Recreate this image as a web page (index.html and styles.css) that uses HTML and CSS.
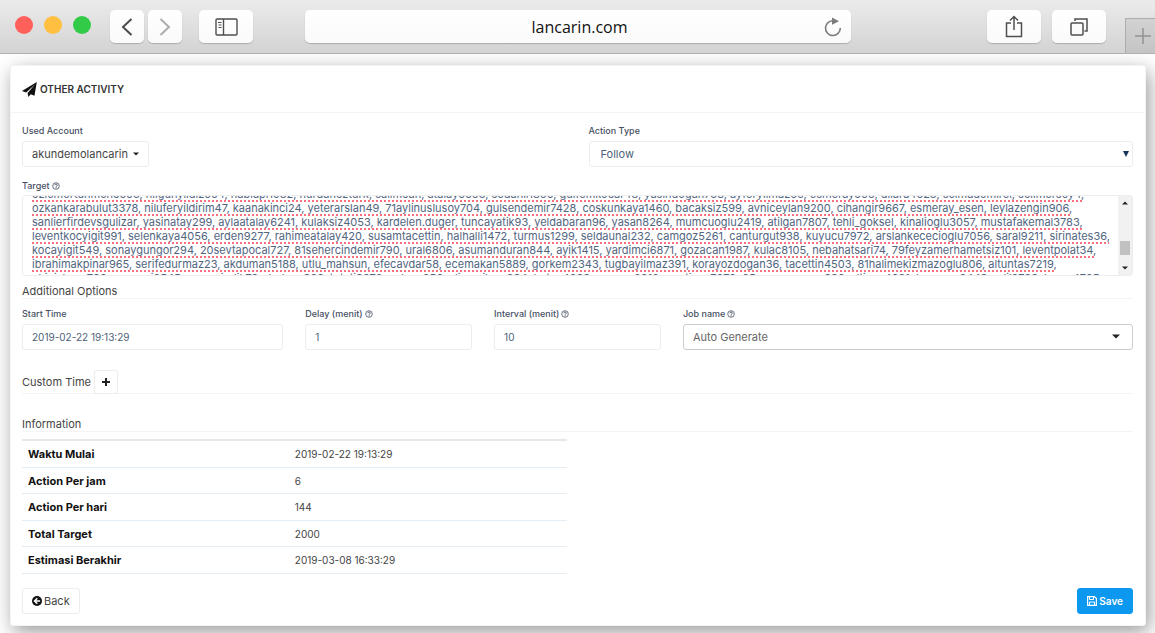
FILE: index.html
```html
<!DOCTYPE html>
<html lang="id">
<head>
<meta charset="utf-8">
<title>Other Activity</title>
<meta name="viewport" content="width=device-width, initial-scale=1">
<link rel="stylesheet" href="styles.css">
</head>
<body>
<svg class="sprite" aria-hidden="true">
  <symbol id="help" viewBox="0 0 16 16"><circle cx="8" cy="8" r="6.6" fill="none" stroke="currentColor" stroke-width="1.6"/><path d="M5.6 6.4C5.7 4.8 6.7 4 8.1 4c1.400 0 2.500.9 2.500 2.200 0 1.700-2.400 1.800-2.400 3.400" fill="none" stroke="currentColor" stroke-width="1.800"/><rect x="7.200" y="10.600" width="2" height="2" fill="currentColor"/></symbol>
  <symbol id="caret" viewBox="0 0 8 5"><path d="M0 .5h8L4 4.500z" fill="currentColor"/></symbol>
</svg>

<header class="toolbar">
  <div class="lights"><span class="light red"></span><span class="light amber"></span><span class="light green"></span></div>
  <div class="nav">
    <button class="tool narrow" aria-label="Previous page"><svg width="12" height="18" viewBox="0 0 12 18"><path d="M10.500 1L2 9l8.500 8" fill="none" stroke="#4c4c4c" stroke-width="2"/></svg></button>
    <button class="tool narrow" aria-label="Next page"><svg width="12" height="18" viewBox="0 0 12 18"><path d="M1.500 1L10 9l-8.500 8" fill="none" stroke="#adadad" stroke-width="2"/></svg></button>
  </div>
  <button class="tool" aria-label="Sidebar"><svg width="23" height="18" viewBox="0 0 23 18" fill="none" stroke="#4f4f4f" stroke-width="1.400"><rect x="1" y="1" width="21" height="16" rx="1"/><path d="M8.500 1v16"/><path d="M3 4.500h3.500M3.500 7h3M3.500 9.500h3" stroke-width="1"/></svg></button>
  <div class="address">
    <input class="url" type="text" value="lancarin.com" aria-label="Address">
    <button class="reload" aria-label="Reload"><svg width="18" height="20" viewBox="0 0 18 20"><path d="M10 3.800A7.400 7.400 0 1 0 16.300 11" fill="none" stroke="#7c7c7c" stroke-width="1.600"/><path d="M8 .5l7 3.700-7 3.600z" fill="#7c7c7c"/></svg></button>
  </div>
  <div class="actions">
    <button class="tool" aria-label="Share"><svg width="18" height="23" viewBox="0 0 18 23" fill="none" stroke="#4f4f4f" stroke-width="1.500"><path d="M6 8H1.500v13.500h15V8H12M9 15V1.500M5 5.500l4-4 4 4"/></svg></button>
    <button class="tool" aria-label="Tabs"><svg width="18" height="18" viewBox="0 0 18 18" fill="none" stroke="#4f4f4f" stroke-width="1.500"><rect x="1" y="5" width="12" height="12" rx="1"/><path d="M5 3V1h12v12h-2.500"/></svg></button>
  </div>
  <button class="new-tab" aria-label="New tab"><svg width="16" height="16" viewBox="0 0 16 16"><path d="M8 0v16M0 8h16" stroke="#929292" stroke-width="1.500"/></svg></button>
</header>

<main class="card">
  <h1 class="card-title"><svg width="15" height="15" viewBox="0 0 16 16"><path d="M15.800 0L0 9.500l4.500 1.800L14 2.500 6 11.800 6.700 16l2.600-3 4 1.700z" fill="#111"/></svg>OTHER ACTIVITY</h1>
  <form class="form">
    <div class="pair">
      <div class="field">
        <label class="label" for="account">Used Account</label>
        <button class="btn account" id="account" type="button">akundemolancarin<svg width="6" height="4"><use href="#caret"/></svg></button>
      </div>
      <div class="field">
        <label class="label" for="action">Action Type</label>
        <div class="select-wrap action"><select class="control" id="action"><option>Follow</option></select><svg class="arrow" width="6" height="6" viewBox="0 0 6 6"><path d="M0 0h6L3 6z" fill="#17365f"/></svg></div>
      </div>
    </div>

    <div class="field target">
      <label class="label" for="target">Target<svg class="help" width="8" height="8"><use href="#help"/></svg></label>
      <div class="target-box">
        <textarea id="target" class="target-text" spellcheck="false" wrap="off">ozlemertunmenc503, nilgunyildiz504, nabiapi1982, nurdanozturk, salimcan, atalay5603, sedanil1860, gulfemkocar48, yasindogan738, ayferyilmaz66, esmeray503, dilara4523, selmademirel, selimersoy4,
ozkankarabulut3378, niluferyildirim47, kaanakinci24, yeterarslan49, 71aylinuslusoy704, gulsendemir7428, coskunkaya1460, bacaksiz599, avniceylan9200, cihangir9667, esmeray_esen, leylazengin906,
sanlierfirdevsgulizar, yasinatay299, aylaatalay6241, kulaksiz4053, kardelen.duger, tuncayatik93, yeldabaran96, yasan8264, mumcuoglu2419, atilgan7807, tehli_goksel, kinalioglu3057, mustafakemal3783,
leventkocyigit991, selenkaya4056, erden9277, rahimeatalay420, susamtacettin, halhalli1472, turmus1299, seldaunal232, camgoz5261, canturgut938, kuyucu7972, arslankececioglu7056, saral9211, sirinates36,
kocayigit549, sonaygungor294, 20sevtapocal727, 81sehercindemir790, ural6806, asumanduran844, ayik1415, yardimci6871, gozacan1987, kulac8105, nebahatsari74, 79feyzamerhametsiz101, leventpolat34,
ibrahimakpinar965, serifedurmaz23, akduman5188, utlu_mahsun, efecavdar58, ecemakan5889, gorkem2343, tugbayilmaz391, korayozdogan36, tacettin4503, 81halimekizmazoglu806, altuntas7219,
okipiskaya736, namemi9545, yasemindik79, dudane366, tutati8672, selcan256, aliosmilcan984, betus4088, cansun2012, martinsu7679, 65maramurcem386, altinsu4991, kuzeyan9448, adil9708, karsu4795,
</textarea>
        <div class="scrollbar" aria-hidden="true"><svg width="6" height="4"><use href="#caret" transform="rotate(180 3 2)"/></svg><span class="thumb"></span><svg width="6" height="4"><use href="#caret"/></svg></div>
      </div>
    </div>

    <h2 class="section">Additional Options</h2>
    <div class="options">
      <div class="field span-3"><label class="label" for="start">Start Time</label><input class="control" id="start" type="text" value="2019-02-22 19:13:29"></div>
      <div class="field span-2"><label class="label" for="delay">Delay (menit)<svg class="help" width="8" height="8"><use href="#help"/></svg></label><input class="control" id="delay" type="text" value="1"></div>
      <div class="field span-2"><label class="label" for="interval">Interval (menit)<svg class="help" width="8" height="8"><use href="#help"/></svg></label><input class="control" id="interval" type="text" value="10"></div>
      <div class="field span-5"><label class="label" for="job">Job name<svg class="help" width="8" height="8"><use href="#help"/></svg></label>
        <div class="select-wrap job"><select class="control" id="job"><option>Auto Generate</option></select><svg class="arrow" width="8" height="5"><use href="#caret"/></svg></div></div>
    </div>

    <h2 class="section custom">Custom Time <button class="btn add" type="button" aria-label="Add custom time"><svg width="8" height="8" viewBox="0 0 8 8"><path d="M4 0v8M0 4h8" stroke="#222" stroke-width="2"/></svg></button></h2>

    <h2 class="section info">Information</h2>
    <table class="summary">
      <tr><th scope="row">Waktu Mulai</th><td>2019-02-22 19:13:29</td></tr>
      <tr><th scope="row">Action Per jam</th><td>6</td></tr>
      <tr><th scope="row">Action Per hari</th><td>144</td></tr>
      <tr><th scope="row">Total Target</th><td>2000</td></tr>
      <tr><th scope="row">Estimasi Berakhir</th><td>2019-03-08 16:33:29</td></tr>
    </table>

    <div class="footer">
      <button class="btn back" type="button"><svg width="10" height="10" viewBox="0 0 16 16"><circle cx="8" cy="8" r="8" fill="#111"/><path d="M13 8H4.500M8.500 3.500L4 8l4.500 4.500" fill="none" stroke="#fff" stroke-width="2.400"/></svg>Back</button>
      <button class="btn save" type="submit"><svg width="10" height="10" viewBox="0 0 10 10" fill="none" stroke="#fff"><path d="M.6.6h6.800l2 2v6.800H.6z" stroke-width="1.200"/><path d="M2.500 1v2.500h4V1M2.500 9V6h5v3"/></svg>Save</button>
    </div>
  </form>
</main>
<script src="script.js"></script>
</body>
</html>
```
FILE: styles.css
```css
* { box-sizing: border-box; }

body {
  margin: 0;
  background: #fff;
  color: #444;
  font: 10px/14px Inter, "Open Sans", sans-serif;
}

button, input, select, textarea { font: inherit; color: inherit; margin: 0; }
.sprite { position: absolute; width: 0; height: 0; }
svg { flex: none; }

/* Browser toolbar */
.toolbar {
  position: relative;
  z-index: 1;
  display: flex;
  align-items: flex-start;
  height: 54px;
  padding: 10px 0 0 15px;
  background: linear-gradient(#ebebeb, #d3d3d3);
  border-bottom: 1px solid #b0b0b0;
}
.lights { display: flex; gap: 11px; padding-top: 6px; margin-right: 19px; }
.light { width: 18px; height: 18px; border-radius: 50%; }
.red { background: #ff6059; }
.amber { background: #ffbf40; }
.green { background: #32cb48; }
.nav { display: flex; gap: 4px; margin-right: 17px; }
.tool {
  display: flex;
  align-items: center;
  justify-content: center;
  width: 54px;
  height: 33px;
  padding: 0;
  border: 0;
  border-radius: 5px;
  background: linear-gradient(#fff, #fafafa);
  box-shadow: 0 1px 1px rgba(0, 0, 0, .2);
}
.narrow { width: 34px; }
.address {
  display: flex;
  align-items: center;
  flex: 1;
  height: 33px;
  margin: 0 136px 0 52px;
  padding: 0 9px 0 30px;
  border-radius: 5px;
  background: linear-gradient(#fff, #fafafa);
  box-shadow: 0 1px 1px rgba(0, 0, 0, .2);
}
.url {
  flex: 1;
  min-width: 0;
  padding: 0;
  border: 0;
  background: none;
  color: #111;
  font: 16px/24px "Open Sans", sans-serif;
  text-align: center;
}
.reload { display: flex; padding: 0; border: 0; background: none; }
.actions { display: flex; gap: 11px; margin-right: 19px; }
.new-tab {
  display: flex;
  align-self: flex-end;
  align-items: center;
  justify-content: flex-end;
  width: 30px;
  height: 35px;
  padding: 0;
  overflow: hidden;
  border: solid #adadad;
  border-width: 1px 0 0 1px;
  background: linear-gradient(#d2d2d2, #c4c4c4);
}
.new-tab svg { margin-right: 4px; }

/* Card */
.card {
  margin: 11px 9px 7px 10px;
  border: 1px solid #f0f5f9;
  border-radius: 3px;
  background: #fff;
  box-shadow: 3px 6px 20px rgba(0, 0, 0, .4);
}
.card-title {
  display: flex;
  align-items: center;
  gap: 3px;
  height: 47px;
  margin: 0;
  padding: 0 11px;
  border-bottom: 1px solid #f4f4f4;
  color: #333;
  font-size: 10px;
  font-weight: 600;
}
.form { padding: 11px 12px 11px 11px; }
.pair { display: grid; grid-template-columns: 1fr 1fr; gap: 22px; }
.field { min-width: 0; }
.label {
  display: flex;
  align-items: center;
  gap: 2px;
  height: 14px;
  margin-bottom: 3px;
  color: #475063;
  font-size: 9px;
  font-weight: 500;
}
.control {
  display: block;
  width: 100%;
  height: 26px;
  padding: 0 9px;
  border: 1px solid #ededed;
  border-radius: 3px;
  background: #fff;
  color: #4d5f78;
  appearance: none;
}
.select-wrap { position: relative; font-size: 11px; }
.arrow { position: absolute; top: 10px; right: 4px; pointer-events: none; }
.action .control { padding: 0 11px; }
.job .control { border: 1px solid #ccc; color: #666; }
.job .arrow { right: 13px; color: #222; }
.btn {
  display: inline-flex;
  align-items: center;
  gap: 2px;
  height: 26px;
  padding: 0 9px;
  border: 1px solid #ededed;
  border-radius: 3px;
  background: #fff;
  color: #444;
}
.account, .back { font-size: 11px; }
.account { gap: 5px; }
.account svg { color: #222; }

/* Target list */
.target { margin-top: 12px; }
.target .label { margin-bottom: 2px; }
.target-box {
  display: flex;
  height: 81px;
  border: 1px solid #ededed;
  border-radius: 3px;
}
.target-text {
  flex: 1;
  min-width: 0;
  padding: 0 0 0 9px;
  overflow: hidden;
  border: 0;
  background: none;
  color: #52657f;
  font-size: 11px;
  line-height: 14px;
  white-space: pre;
  resize: none;
  text-decoration: underline dotted #fb6f80 2px;
  text-underline-offset: 2px;
  text-decoration-skip-ink: none;
}
.scrollbar {
  display: flex;
  flex-direction: column;
  align-items: center;
  width: 14px;
  padding: 5px 1px;
  background: #f1f1f1;
  color: #222;
}
.thumb { width: 10px; height: 14px; margin: auto 0 11px; background: #c1c1c1; }

/* Sections */
.section {
  display: flex;
  align-items: center;
  gap: 3px;
  height: 16px;
  margin: 7px 0 8px;
  border-bottom: 1px solid #f4f4f4;
  color: #444;
  font-size: 11px;
  font-weight: 400;
}
.options { display: grid; grid-template-columns: repeat(12, minmax(0, 1fr)); gap: 22px; }
.span-2 { grid-column: span 2; }
.span-3 { grid-column: span 3; }
.span-5 { grid-column: span 5; }
.custom { height: 24px; margin-top: 20px; }
.add { justify-content: center; width: 24px; height: 24px; padding: 0; }
.info { margin: 22px 0 7px; }

.summary {
  width: calc(50% - 11px);
  height: 135px;
  border-collapse: collapse;
  table-layout: fixed;
  border-top: 2px solid #e6e9eb;
  font-size: 10px;
}
.summary th, .summary td {
  padding: 0 6px;
  border-bottom: 1px solid #e4edf4;
  text-align: left;
}
.summary th { width: 49%; color: #111; font-size: 11px; font-weight: 700; }
.footer { display: flex; justify-content: space-between; margin-top: 14px; }
.save { border-color: #0d98ef; background: #0d98ef; color: #fff; font-weight: 600; }
```
FILE: script.js
```js
// Open the target list scrolled part-way into its first row.
document.getElementById('target').scrollTop = 9;
```
